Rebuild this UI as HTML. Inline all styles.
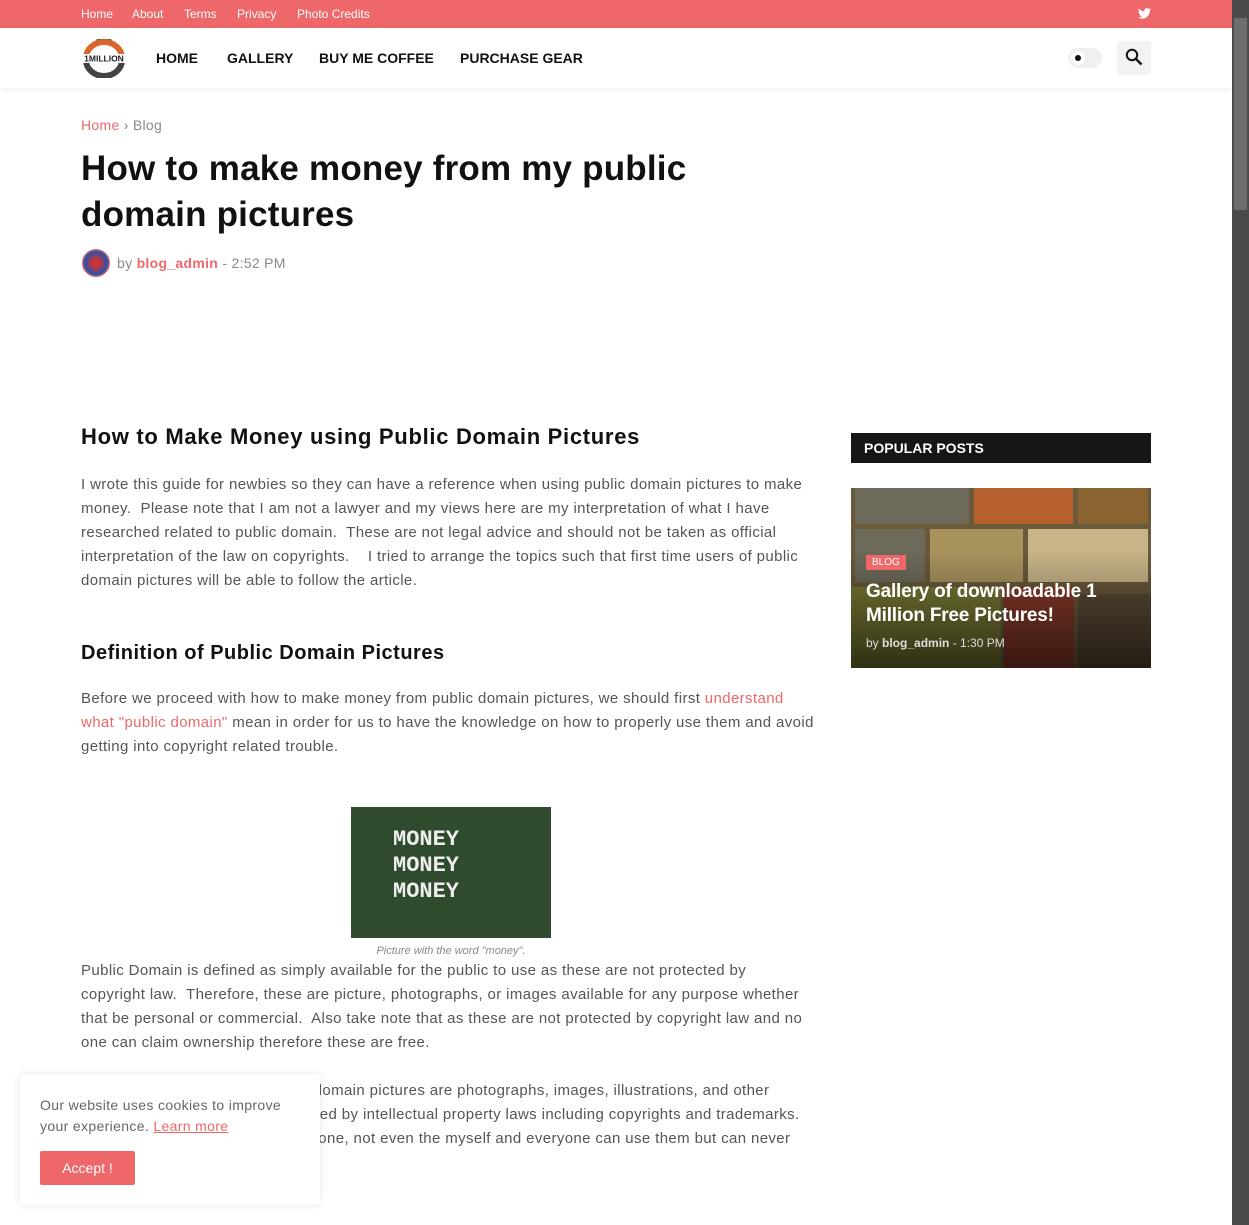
<!DOCTYPE html>
<html><head><meta charset="utf-8"><style>
*{box-sizing:border-box;margin:0;padding:0}
body{width:1249px;height:1225px;overflow:hidden;font-family:"Liberation Sans",sans-serif;background:#fff;position:relative;color:#555}
.top{position:absolute;left:0;top:0;width:1232px;height:28px;background:#ee6769}
.top a{position:absolute;top:7px;color:#fff;font-size:12px;text-decoration:none}
.hdr{position:absolute;left:0;top:28px;width:1232px;height:60px;background:#fff;box-shadow:0 2px 6px rgba(0,0,0,.06)}
.nav{position:absolute;top:22px;font-size:14px;font-weight:bold;color:#111}
.sb{position:absolute;right:0;top:0;width:17px;height:1225px;background:#4a4a4a}
.sb .th{position:absolute;left:2px;top:18px;width:13px;height:192px;background:#6e6e6e}
h1{position:absolute;left:81px;top:146px;width:700px;font-size:35px;line-height:46px;color:#111;font-weight:bold;letter-spacing:.2px}
h2{position:absolute;left:81px;font-size:22px;color:#111;font-weight:bold;letter-spacing:.7px}
p{position:absolute;left:81px;width:733px;font-size:15px;line-height:24px;color:#555;letter-spacing:.38px}
.r{color:#ee6769}
</style></head><body>
<div class="top">
<a style="left:81px">Home</a><a style="left:132px">About</a><a style="left:184px">Terms</a><a style="left:237px">Privacy</a><a style="left:297px">Photo Credits</a>
<svg style="position:absolute;left:1138px;top:8px" width="13" height="11" viewBox="0 0 24 20"><path fill="#fff" d="M24 2.4a9.8 9.8 0 0 1-2.8.8A4.9 4.9 0 0 0 23.3.4a9.9 9.9 0 0 1-3.1 1.2A4.9 4.9 0 0 0 11.8 6 14 14 0 0 1 1.7.9a4.9 4.9 0 0 0 1.5 6.6A4.9 4.9 0 0 1 1 6.9a4.9 4.9 0 0 0 3.9 4.9 4.9 4.9 0 0 1-2.2.1 4.9 4.9 0 0 0 4.6 3.4A9.9 9.9 0 0 1 0 17.3 14 14 0 0 0 7.5 19.5c9.1 0 14-7.5 14-14v-.6A10 10 0 0 0 24 2.4z"/></svg>
</div>
<div class="hdr">
<svg style="position:absolute;left:81px;top:10px" width="46" height="40" viewBox="0 0 46 40"><rect x="15" y="1" width="16" height="5" rx="2" fill="#555"/><path d="M5 20a18 16 0 0 1 36 0" fill="none" stroke="#d9662f" stroke-width="6"/><path d="M5 22a18 16 0 0 0 36 0" fill="none" stroke="#444" stroke-width="6"/><rect x="1" y="16" width="44" height="9" fill="#fff"/><text x="23" y="23.5" font-size="8.5" font-family="Liberation Sans" font-weight="bold" text-anchor="middle" fill="#222">1MILLION</text></svg>
<span class="nav" style="left:156px">HOME</span><span class="nav" style="left:227px">GALLERY</span><span class="nav" style="left:319px">BUY ME COFFEE</span><span class="nav" style="left:460px">PURCHASE GEAR</span>
<div style="position:absolute;left:1068px;top:20px;width:34px;height:20px;border-radius:10px;background:#f0f0f0"><div style="position:absolute;left:3px;top:3px;width:14px;height:14px;border-radius:7px;background:#fff"></div><div style="position:absolute;left:7px;top:7px;width:6px;height:6px;border-radius:3px;background:#111"></div></div>
<div style="position:absolute;left:1117px;top:13px;width:34px;height:34px;border-radius:3px;background:#f1f2f2"></div>
<svg style="position:absolute;left:1125px;top:20px" width="18" height="18" viewBox="0 0 18 18"><circle cx="7" cy="7" r="5.2" fill="none" stroke="#111" stroke-width="2"/><path d="M11 11l5.5 5.5" stroke="#111" stroke-width="2.4"/></svg>
</div>
<div style="position:absolute;left:81px;top:117px;font-size:14px;color:#888;letter-spacing:.3px"><span class="r">Home</span> › Blog</div>
<h1>How to make money from my public domain pictures</h1>
<div style="position:absolute;left:82px;top:249px;width:28px;height:28px;border-radius:14px;border:1px solid #ee6769;background:radial-gradient(circle,#c33 20%,#2f4fa8 60%,#e8b24a)"></div>
<div style="position:absolute;left:117px;top:255px;font-size:14px;color:#888;letter-spacing:.3px">by <b class="r" style="font-weight:600">blog_admin</b> - 2:52 PM</div>
<h2 style="top:424px">How to Make Money using Public Domain Pictures</h2>
<p style="top:473px">I wrote this guide for newbies so they can have a reference when using public domain pictures to make money.&nbsp; Please note that I am not a lawyer and my views here are my interpretation of what I have researched related to public domain.&nbsp; These are not legal advice and should not be taken as official interpretation of the law on copyrights.&nbsp;&nbsp;&nbsp; I tried to arrange the topics such that first time users of public domain pictures will be able to follow the article.</p>
<h2 style="top:642px;font-size:20px;letter-spacing:.5px">Definition of Public Domain Pictures</h2>
<p style="top:687px">Before we proceed with how to make money from public domain pictures, we should first <span class="r">understand what "public domain"</span> mean in order for us to have the knowledge on how to properly use them and avoid getting into copyright related trouble.</p>
<div style="position:absolute;left:351px;top:807px;width:200px;height:131px;background:#2f4a2c;color:#eee;font:bold 22px 'Liberation Mono',monospace;line-height:26px;padding:20px 0 0 42px">MONEY<br>MONEY<br>MONEY</div>
<div style="position:absolute;left:351px;top:945px;width:200px;text-align:center;font-size:11px;font-style:italic;color:#888">Picture with the word "money".</div>
<p style="top:959px">Public Domain is defined as simply available for the public to use as these are not protected by copyright law.&nbsp; Therefore, these are picture, photographs, or images available for any purpose whether that be personal or commercial.&nbsp; Also take note that as these are not protected by copyright law and no one can claim ownership therefore these are free.</p>
<p style="top:1079px">In summary of everything, public domain pictures are photographs, images, illustrations, and other visual pictures that are not protected by intellectual property laws including copyrights and trademarks.&nbsp; These are therefore owned by no one, not even the myself and everyone can use them but can never own them as these are already in</p>
<div style="position:absolute;left:851px;top:433px;width:300px;height:30px;background:#161617;color:#fff;font-size:14px;font-weight:bold;padding:7px 13px">POPULAR POSTS</div>
<div style="position:absolute;left:851px;top:488px;width:300px;height:180px;overflow:hidden;background:#6b5a3a">
<div style="position:absolute;left:4px;top:0;width:114px;height:36px;background:#6d6a5a"></div>
<div style="position:absolute;left:123px;top:0;width:99px;height:36px;background:#b5602d"></div>
<div style="position:absolute;left:227px;top:0;width:70px;height:36px;background:#8a6430"></div>
<div style="position:absolute;left:4px;top:41px;width:70px;height:53px;background:#6d6a5a"></div>
<div style="position:absolute;left:79px;top:41px;width:93px;height:53px;background:#a8935f"></div>
<div style="position:absolute;left:177px;top:41px;width:120px;height:53px;background:#c8b488"></div>
<div style="position:absolute;left:0;top:99px;width:150px;height:81px;background:#7a7a35"></div>
<div style="position:absolute;left:153px;top:99px;width:70px;height:81px;background:#8a3a2a"></div>
<div style="position:absolute;left:227px;top:106px;width:73px;height:74px;background:#5a4a35"></div>
<div style="position:absolute;inset:0;background:linear-gradient(rgba(0,0,0,0) 35%,rgba(0,0,0,.6))"></div>
<div style="position:absolute;left:15px;top:67px;background:#ee6769;color:#fff;font-size:10px;padding:2px 6px">BLOG</div>
<div style="position:absolute;left:15px;top:92px;width:280px;color:#fff;font-size:19px;font-weight:bold;line-height:24px;letter-spacing:-.2px">Gallery of downloadable 1 Million Free Pictures!</div>
<div style="position:absolute;left:15px;top:148px;color:#ddd;font-size:12px">by <b>blog_admin</b> - 1:30 PM</div>
</div>
<div style="position:absolute;left:20px;top:1074px;width:300px;height:131px;background:#fff;box-shadow:0 0 8px rgba(0,0,0,.1);border-radius:3px">
<div style="position:absolute;left:20px;top:21px;width:260px;font-size:14px;line-height:21px;color:#666;letter-spacing:.35px">Our website uses cookies to improve your experience. <span class="r" style="text-decoration:underline">Learn more</span></div>
<div style="position:absolute;left:20px;top:77px;width:95px;height:34px;background:#ee6769;border-radius:2px;color:#fff;font-size:14px;text-align:center;line-height:34px">Accept !</div>
</div>
<div class="sb"><div class="th"></div></div>
</body></html>
